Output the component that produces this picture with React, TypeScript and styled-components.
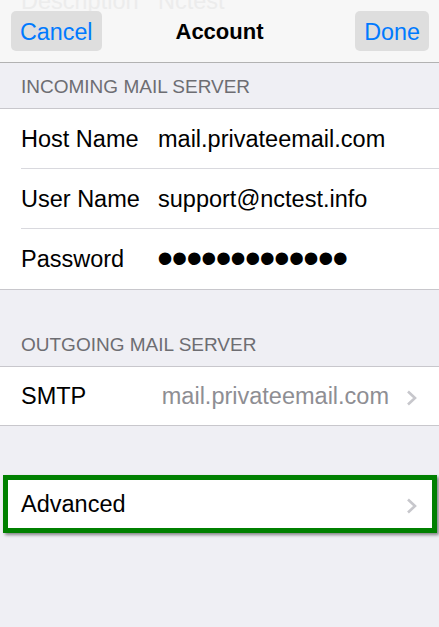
import React from "react";
import styled, { createGlobalStyle } from "styled-components";

const Global = createGlobalStyle`
  html, body { margin: 0; padding: 0; background: #efeff4; }
  body { font-family: "Liberation Sans", Arial, sans-serif; -webkit-font-smoothing: antialiased; }
  * { box-sizing: border-box; }
`;

const Screen = styled.div`
  width: 439px;
  min-height: 627px;
  background: #efeff4;
  overflow: hidden;
  position: relative;
`;

const NavBar = styled.div`
  position: relative;
  height: 63px;
  background: #f7f7f7;
  border-bottom: 1px solid #b2b2b2;
  display: flex;
  align-items: flex-start;
  justify-content: space-between;
  padding: 11px 10px 0 11px;
  overflow: hidden;
`;

const Ghost = styled.div`
  position: absolute;
  top: -12px;
  left: 21px;
  display: flex;
  font-size: 23.5px;
  line-height: 27px;
  color: #ececec;
  pointer-events: none;
`;

const GhostLabel = styled.span`
  width: 137px;
`;

const NavButton = styled.button`
  position: relative;
  height: 40px;
  padding: 0 9px;
  border: none;
  border-radius: 5px;
  background: #dedede;
  color: #007aff;
  font-family: "Liberation Sans", Arial, sans-serif;
  font-size: 23.3px;
  line-height: 42px;
`;

const Title = styled.div`
  position: absolute;
  left: 0;
  right: 0;
  top: 12px;
  height: 40px;
  line-height: 40px;
  text-align: center;
  font-size: 22px;
  font-weight: bold;
  color: #000;
  pointer-events: none;
`;

const SectionHeader = styled.div<{ $gap?: number }>`
  height: 45px;
  margin-top: ${(p) => p.$gap ?? 0}px;
  padding: 14px 21px 0;
  font-size: 19px;
  line-height: 19px;
  color: #6d6d72;
  text-transform: uppercase;
`;

const Group = styled.div<{ $gap?: number; $plain?: boolean }>`
  margin-top: ${(p) => p.$gap ?? 0}px;
  background: ${(p) => (p.$plain ? "transparent" : "#fff")};
  border-top: ${(p) => (p.$plain ? "none" : "1px solid #c8c7cc")};
  border-bottom: ${(p) => (p.$plain ? "none" : "1px solid #c8c7cc")};
`;

const Row = styled.div<{ $h?: number }>`
  position: relative;
  height: ${(p) => p.$h ?? 60}px;
  display: flex;
  align-items: center;
  padding: 0 21px;
  font-size: 23.5px;
  color: #000;
  &:not(:last-child)::after {
    content: "";
    position: absolute;
    left: 21px;
    right: 0;
    bottom: 0;
    height: 1px;
    background: #d9d9de;
  }
`;

const HighlightRow = styled.div`
  height: 58px;
  margin: 0 2px 0 3px;
  display: flex;
  align-items: center;
  padding: 0 14px 0 13px;
  background: #fff;
  border: 5px solid #008000;
  box-shadow: 2px 2px 3px rgba(0, 0, 0, 0.45);
  font-size: 23.5px;
  color: #000;
`;

const Label = styled.span`
  flex: 0 0 137px;
`;

const Value = styled.span<{ $muted?: boolean }>`
  flex: 1;
  color: ${(p) => (p.$muted ? "#8e8e93" : "#000")};
  text-align: ${(p) => (p.$muted ? "right" : "left")};
  white-space: nowrap;
`;

const Dots = styled.span`
  flex: 1;
  font-size: 46px;
  letter-spacing: -1.5px;
  line-height: 46px;
  margin-left: -1px;
  padding-bottom: 2px;
  white-space: nowrap;
`;

const Spacer = styled.span`
  flex: 1;
`;

const ChevronWrap = styled.span`
  display: flex;
  margin-left: 17px;
  margin-top: 4px;
`;

const Chevron = () => (
  <ChevronWrap>
    <svg width="12" height="16" viewBox="0 0 12 16">
      <path d="M2 1.5 L9 8 L2 14.5" fill="none" stroke="#c7c7cc" strokeWidth="2.6" />
    </svg>
  </ChevronWrap>
);

export default function App() {
  return (
    <Screen>
      <Global />
      <NavBar>
        <Ghost>
          <GhostLabel>Description</GhostLabel>
          <span>Nctest</span>
        </Ghost>
        <NavButton>Cancel</NavButton>
        <Title>Account</Title>
        <NavButton>Done</NavButton>
      </NavBar>

      <SectionHeader>Incoming Mail Server</SectionHeader>
      <Group>
        <Row>
          <Label>Host Name</Label>
          <Value>mail.privateemail.com</Value>
        </Row>
        <Row>
          <Label>User Name</Label>
          <Value>support@nctest.info</Value>
        </Row>
        <Row>
          <Label>Password</Label>
          <Dots>•••••••••••••</Dots>
        </Row>
      </Group>

      <SectionHeader $gap={31}>Outgoing Mail Server</SectionHeader>
      <Group>
        <Row $h={58}>
          <Label>SMTP</Label>
          <Value $muted>mail.privateemail.com</Value>
          <Chevron />
        </Row>
      </Group>

      <Group $gap={49} $plain>
        <HighlightRow>
          <span>Advanced</span>
          <Spacer />
          <Chevron />
        </HighlightRow>
      </Group>
    </Screen>
  );
}
